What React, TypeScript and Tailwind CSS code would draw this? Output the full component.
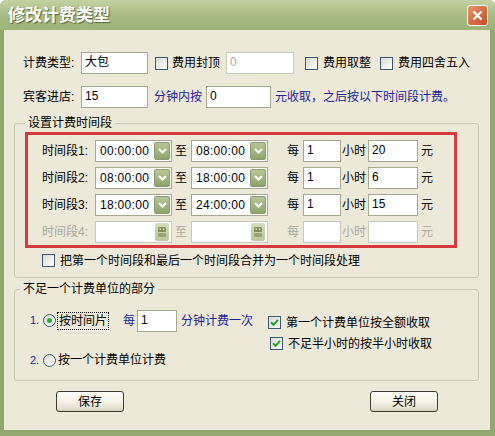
import React from 'react'

type BoxProps = { value?: string; className?: string; disabled?: boolean }

function TextBox({ value = '', className = '', disabled = false }: BoxProps) {
  return (
    <div
      className={`h-[22px] shrink-0 border bg-white px-[3px] text-[12px] leading-[18px] ${
        disabled ? 'border-[#cac8b6] text-[#aca899]' : 'border-[#a7a78e] text-black'
      } ${className}`}
    >
      {value}
    </div>
  )
}

function DropButton({ disabled = false }: { disabled?: boolean }) {
  if (disabled) {
    return (
      <div className="mr-[2px] flex h-[18px] w-[14px] items-center justify-center rounded-[2px] bg-gradient-to-b from-[#d3dcb8] to-[#b9c699]">
        <svg width="10" height="12" viewBox="0 0 10 12">
          <rect x="1" y="1" width="8" height="5" rx="1" fill="#7f8f5a" />
          <rect x="2.5" y="2.5" width="1.5" height="1.5" fill="#d8e0c0" />
          <rect x="6" y="2.5" width="1.5" height="1.5" fill="#d8e0c0" />
          <rect x="1" y="7" width="8" height="4" rx="1" fill="#97a671" />
        </svg>
      </div>
    )
  }
  return (
    <div className="mr-[1px] flex h-[18px] w-[16px] items-center justify-center rounded-[2px] border border-[#8a9c6a] bg-gradient-to-b from-[#b7c69a] to-[#8fa36c]">
      <svg width="9" height="6" viewBox="0 0 9 6">
        <path d="M1 1 L4.5 4.5 L8 1" fill="none" stroke="#ffffff" strokeWidth="2" />
      </svg>
    </div>
  )
}

function Combo({ value = '', className = '', disabled = false }: BoxProps) {
  return (
    <div
      className={`flex h-[22px] w-[77px] shrink-0 items-center border bg-white ${
        disabled ? 'border-[#cac8b6]' : 'border-[#a7a78e]'
      } ${className}`}
    >
      <span className="flex-1 pl-[4px] text-[12px] leading-[20px] tracking-[0.3px]">{value}</span>
      <DropButton disabled={disabled} />
    </div>
  )
}

function CheckBox({ checked = false, className = '' }: { checked?: boolean; className?: string }) {
  return (
    <div
      className={`flex h-[13px] w-[13px] shrink-0 items-center justify-center border border-[#3f5873] bg-gradient-to-br from-[#d9d9d2] to-white ${className}`}
    >
      {checked && (
        <svg width="9" height="9" viewBox="0 0 9 9">
          <path d="M1 4.2 L3.5 6.8 L8 1.8" fill="none" stroke="#22a622" strokeWidth="2" />
        </svg>
      )}
    </div>
  )
}

function Radio({ checked = false }: { checked?: boolean }) {
  return (
    <div className="flex h-[13px] w-[13px] shrink-0 items-center justify-center rounded-full border border-[#3f5873] bg-gradient-to-br from-[#d9d9d2] to-white">
      {checked && <div className="h-[5px] w-[5px] rounded-full bg-[#2cae2c]" />}
    </div>
  )
}

type RowProps = { n: number; from?: string; to?: string; per?: string; price?: string; disabled?: boolean }

function PeriodRow({ n, from = '', to = '', per = '', price = '', disabled = false }: RowProps) {
  const t = disabled ? 'text-[#aca899]' : 'text-black'
  return (
    <div className="flex h-[22px] items-center">
      <span className={`w-[53px] shrink-0 ${t}`}>时间段{n}:</span>
      <Combo value={from} disabled={disabled} />
      <span className={`ml-[3px] w-[12px] shrink-0 ${t}`}>至</span>
      <Combo className="ml-[4px]" value={to} disabled={disabled} />
      <span className={`ml-[19px] w-[12px] shrink-0 ${t}`}>每</span>
      <TextBox className="ml-[4px] w-[38px]" value={per} disabled={disabled} />
      <span className={`ml-[1px] w-[24px] shrink-0 ${t}`}>小时</span>
      <TextBox className="ml-[2px] w-[50px]" value={price} disabled={disabled} />
      <span className={`ml-[3px] ${t}`}>元</span>
    </div>
  )
}

function XpButton({ label, className = '' }: { label: string; className?: string }) {
  return (
    <div
      className={`flex h-[21px] w-[68px] items-center justify-center rounded-[3px] border border-[#3d3d33] bg-gradient-to-b from-[#fdfdf8] via-[#f4f2e6] to-[#dedbc8] text-[12px] shadow-[inset_0_-1px_0_#cfccb7] ${className}`}
    >
      {label}
    </div>
  )
}

export default function App() {
  return (
    <div className="h-[436px] w-[495px] bg-white">
      <div className="flex h-[436px] w-[495px] flex-col overflow-hidden rounded-t-[6px] bg-[#93a870] font-['Liberation_Sans','Noto_Sans_CJK_SC',sans-serif] text-[12px] text-black">
        {/* title bar */}
        <div className="flex h-[30px] shrink-0 items-center justify-between bg-gradient-to-b from-[#c4d2a3] via-[#a8bb84] to-[#9db377] pl-[8px] pr-[7px]">
          <span className="text-[17px] font-bold leading-none text-white [text-shadow:1px_1px_1px_#55653a]">修改计费类型</span>
          <div className="flex h-[21px] w-[21px] items-center justify-center rounded-[3px] border border-white bg-gradient-to-br from-[#e9936a] to-[#c54b25]">
            <svg width="11" height="11" viewBox="0 0 11 11">
              <path d="M1.5 1.5 L9.5 9.5 M9.5 1.5 L1.5 9.5" stroke="#ffffff" strokeWidth="2.2" />
            </svg>
          </div>
        </div>

        {/* body */}
        <div className="ml-[4px] h-[400px] w-[486px] shrink-0 bg-[#ece9d8]">
          {/* row 1 */}
          <div className="ml-[19px] mt-[22px] flex h-[22px] items-center">
            <span className="w-[58px] shrink-0">计费类型:</span>
            <TextBox className="w-[67px]" value="大包" />
            <CheckBox className="ml-[7px]" />
            <span className="ml-[4px] w-[48px] shrink-0">费用封顶</span>
            <TextBox className="ml-[6px] w-[68px]" value="0" disabled />
            <CheckBox className="ml-[11px]" />
            <span className="ml-[5px] w-[48px] shrink-0">费用取整</span>
            <CheckBox className="ml-[9px]" />
            <span className="ml-[5px]">费用四舍五入</span>
          </div>

          {/* row 2 */}
          <div className="ml-[19px] mt-[12px] flex h-[22px] items-center">
            <span className="w-[58px] shrink-0">宾客进店:</span>
            <TextBox className="w-[67px]" value="15" />
            <span className="ml-[6px] w-[48px] shrink-0 text-[#23239a]">分钟内按</span>
            <TextBox className="ml-[4px] w-[65px]" value="0" />
            <span className="ml-[4px] text-[#23239a]">元收取，之后按以下时间段计费。</span>
          </div>

          {/* group 1 */}
          <fieldset className="ml-[10px] mt-[7px] w-[465px] rounded-[3px] border border-[#c9c6b4] pb-[9px]">
            <legend className="ml-[10px] px-[3px] leading-[16px]">设置计费时间段</legend>
            <div className="ml-[10px] mt-[1px] flex w-[432px] flex-col gap-[5px] border-[3px] border-[#d8393c] pb-[2px] pl-[14px] pt-[5px]">
              <PeriodRow n={1} from="00:00:00" to="08:00:00" per="1" price="20" />
              <PeriodRow n={2} from="08:00:00" to="18:00:00" per="1" price="6" />
              <PeriodRow n={3} from="18:00:00" to="24:00:00" per="1" price="15" />
              <PeriodRow n={4} disabled />
            </div>
            <div className="ml-[27px] mt-[5px] flex h-[15px] items-center">
              <CheckBox />
              <span className="ml-[5px]">把第一个时间段和最后一个时间段合并为一个时间段处理</span>
            </div>
          </fieldset>

          {/* group 2 */}
          <fieldset className="ml-[10px] mt-[3px] w-[465px] rounded-[3px] border border-[#c9c6b4] pb-[12px]">
            <legend className="ml-[5px] px-[3px] leading-[16px]">不足一个计费单位的部分</legend>
            <div className="ml-[15px] mt-[13px] flex h-[21px] items-center">
              <span className="w-[13px] shrink-0 text-[11px] text-[#23239a]">1.</span>
              <Radio checked />
              <span className="ml-[1px] border border-dotted border-black px-[1px] leading-[16px]">按时间片</span>
              <span className="ml-[14px] w-[12px] shrink-0 text-[#23239a]">每</span>
              <TextBox className="ml-[2px] w-[40px]" value="1" />
              <span className="ml-[4px] w-[72px] shrink-0 text-[#23239a]">分钟计费一次</span>
              <CheckBox className="ml-[15px] mt-[4px]" checked />
              <span className="ml-[5px] mt-[4px]">第一个计费单位按全额收取</span>
            </div>
            <div className="ml-[255px] mt-[5px] flex h-[15px] items-center">
              <CheckBox checked />
              <span className="ml-[5px]">不足半小时的按半小时收取</span>
            </div>
            <div className="ml-[15px] mt-[1px] flex h-[16px] items-center">
              <span className="w-[13px] shrink-0 text-[11px] text-[#23239a]">2.</span>
              <Radio />
              <span className="ml-[2px]">按一个计费单位计费</span>
            </div>
          </fieldset>

          {/* buttons */}
          <div className="mt-[10px] flex">
            <XpButton className="ml-[52px]" label="保存" />
            <XpButton className="ml-[246px]" label="关闭" />
          </div>
        </div>
      </div>
    </div>
  )
}
